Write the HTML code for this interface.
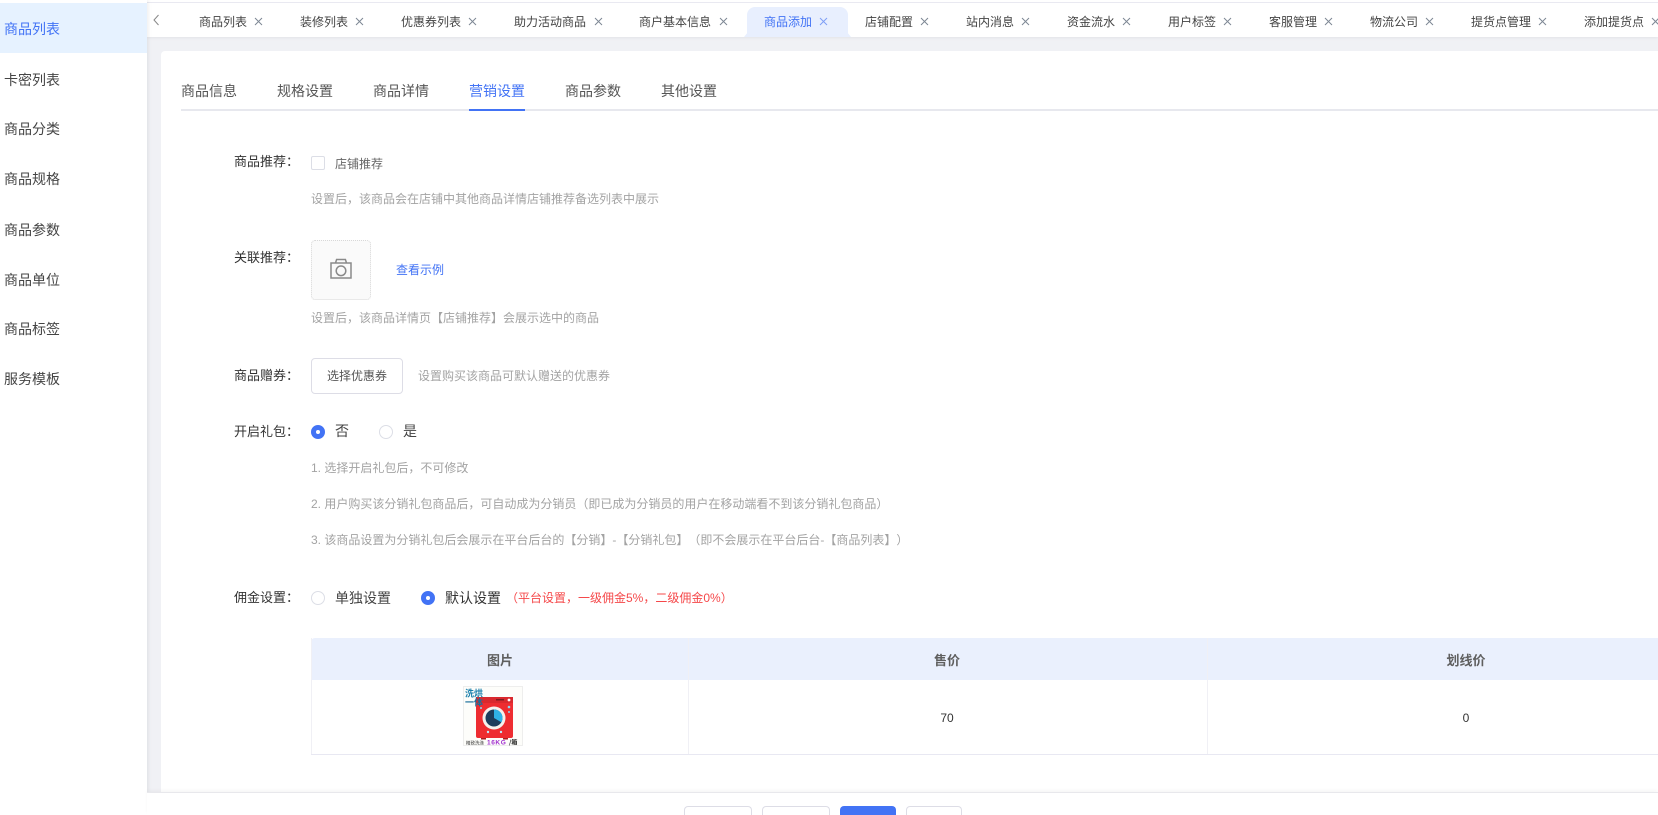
<!DOCTYPE html>
<html lang="zh-CN">
<head>
<meta charset="utf-8">
<title>商品添加</title>
<style>
*{box-sizing:border-box;margin:0;padding:0}
html,body{width:1658px;height:815px;overflow:hidden;background:#fff}
#page{position:relative;width:1658px;height:815px;overflow:hidden;background:#fff;font-family:"Liberation Sans","Noto Sans CJK SC",sans-serif;color:#333;text-spacing-trim:space-all}
.abs,.t,.x,.lb,.h{position:absolute}
.t,.lb,.h{white-space:nowrap;line-height:20px}
#main{position:absolute;left:147px;top:0;width:1511px;height:815px;background:#f0f1f5}
#side{position:absolute;left:0;top:0;width:147px;height:815px;background:#fff;box-shadow:1px 0 4px rgba(0,0,0,.08);z-index:3}
#side .it{position:absolute;left:0;width:147px;height:50px;line-height:50px;padding-left:4px;font-size:14px;color:#444}
#side .on{background:#e6f2ff;color:#4273f5;line-height:52px}
#bar{position:absolute;left:147px;top:0;width:1511px;height:37px;background:#fff;box-shadow:0 1px 3px rgba(0,0,0,.06)}
#ln{position:absolute;left:147px;top:2px;width:1511px;height:1px;background:#e9e9f1;z-index:2}
.tab{font-size:12px;color:#444;top:12px;z-index:2}
.x{width:9px;height:9px;top:17px;z-index:2}
#act{position:absolute;left:747px;top:7px;width:101px;height:30px;background:#e8effe;border-radius:8px 8px 0 0;z-index:1}
#act:before,#act:after{content:"";position:absolute;bottom:0;width:4px;height:5px;background:#e8effe}
#act:before{left:-3px;clip-path:polygon(100% 0,100% 100%,0 100%)}
#act:after{right:-3px;clip-path:polygon(0 0,100% 100%,0 100%)}
#card{position:absolute;left:161px;top:51px;width:1497px;height:741px;background:#fff;border-radius:4px 0 0 0}
.ct{font-size:14px;color:#555;top:81px;z-index:2}
#ul{position:absolute;left:181px;top:109px;width:1477px;height:2px;background:#e7e8ee;z-index:2}
#ul2{position:absolute;left:469px;top:109px;width:56px;height:2px;background:#4273f5;z-index:2}
.lb{left:234px;font-size:13px;color:#333;z-index:2}
.h{font-size:12px;color:#a3a3a3;z-index:2}
.radio{position:absolute;width:14px;height:14px;border-radius:50%;border:1px solid #dcdee6;background:#fff;z-index:2}
.radio.on{background:#4273f5;border-color:#4273f5}
.radio.on:after{content:"";position:absolute;left:4px;top:4px;width:4px;height:4px;border-radius:50%;background:#fff}
.btn{position:absolute;background:#fff;border:1px solid #dddde6;border-radius:4px;z-index:2}
#th{position:absolute;left:311px;top:638px;width:1347px;height:42px;background:#eaf0fd;border-radius:4px 0 0 0;z-index:2}
.thx{font-size:13px;font-weight:bold;color:#5f5f5f;top:651px;transform:translateX(-50%);z-index:3}
.td{font-size:12px;color:#333;top:708px;transform:translateX(-50%);z-index:3}
.vl{position:absolute;width:1px;background:#f0f0f5;z-index:3}
#foot{position:absolute;left:147px;top:792px;width:1511px;height:23px;background:#fff;border-top:1px solid #e8e8ec;box-shadow:0 -2px 3px rgba(0,0,0,.03);z-index:4}
.bb{top:806px;height:9px;border-bottom:0;border-radius:4px 4px 0 0;z-index:5}
</style>
</head>
<body>
<div id="page">
<div id="main"></div>
<div id="side">
  <div class="it on" style="top:3px">商品列表</div>
  <div class="it" style="top:55px">卡密列表</div>
  <div class="it" style="top:104px">商品分类</div>
  <div class="it" style="top:154px">商品规格</div>
  <div class="it" style="top:205px">商品参数</div>
  <div class="it" style="top:255px">商品单位</div>
  <div class="it" style="top:304px">商品标签</div>
  <div class="it" style="top:354px">服务模板</div>
</div>
<div id="bar"></div>
<div id="ln"></div>
<div id="act"></div>
<svg class="abs" style="left:152px;top:13px;z-index:2" width="8" height="14" viewBox="0 0 8 14"><path d="M6.5 2 L2 7 L6.5 12" fill="none" stroke="#888" stroke-width="1"/></svg>

<span class="t tab" style="left:199px">商品列表</span>
<span class="t tab" style="left:300px">装修列表</span>
<span class="t tab" style="left:401px">优惠券列表</span>
<span class="t tab" style="left:514px">助力活动商品</span>
<span class="t tab" style="left:639px">商户基本信息</span>
<span class="t tab" style="left:764px;color:#4273f5">商品添加</span>
<span class="t tab" style="left:865px">店铺配置</span>
<span class="t tab" style="left:966px">站内消息</span>
<span class="t tab" style="left:1067px">资金流水</span>
<span class="t tab" style="left:1168px">用户标签</span>
<span class="t tab" style="left:1269px">客服管理</span>
<span class="t tab" style="left:1370px">物流公司</span>
<span class="t tab" style="left:1471px">提货点管理</span>
<span class="t tab" style="left:1584px">添加提货点</span>

<svg class="x" style="left:254px" viewBox="0 0 9 9"><path d="M1 1L8 8M8 1L1 8" stroke="#7d8794" fill="none"/></svg>
<svg class="x" style="left:355px" viewBox="0 0 9 9"><path d="M1 1L8 8M8 1L1 8" stroke="#7d8794" fill="none"/></svg>
<svg class="x" style="left:468px" viewBox="0 0 9 9"><path d="M1 1L8 8M8 1L1 8" stroke="#7d8794" fill="none"/></svg>
<svg class="x" style="left:594px" viewBox="0 0 9 9"><path d="M1 1L8 8M8 1L1 8" stroke="#7d8794" fill="none"/></svg>
<svg class="x" style="left:719px" viewBox="0 0 9 9"><path d="M1 1L8 8M8 1L1 8" stroke="#7d8794" fill="none"/></svg>
<svg class="x" style="left:819px" viewBox="0 0 9 9"><path d="M1 1L8 8M8 1L1 8" stroke="#7f9ff5" fill="none"/></svg>
<svg class="x" style="left:920px" viewBox="0 0 9 9"><path d="M1 1L8 8M8 1L1 8" stroke="#7d8794" fill="none"/></svg>
<svg class="x" style="left:1021px" viewBox="0 0 9 9"><path d="M1 1L8 8M8 1L1 8" stroke="#7d8794" fill="none"/></svg>
<svg class="x" style="left:1122px" viewBox="0 0 9 9"><path d="M1 1L8 8M8 1L1 8" stroke="#7d8794" fill="none"/></svg>
<svg class="x" style="left:1223px" viewBox="0 0 9 9"><path d="M1 1L8 8M8 1L1 8" stroke="#7d8794" fill="none"/></svg>
<svg class="x" style="left:1324px" viewBox="0 0 9 9"><path d="M1 1L8 8M8 1L1 8" stroke="#7d8794" fill="none"/></svg>
<svg class="x" style="left:1425px" viewBox="0 0 9 9"><path d="M1 1L8 8M8 1L1 8" stroke="#7d8794" fill="none"/></svg>
<svg class="x" style="left:1538px" viewBox="0 0 9 9"><path d="M1 1L8 8M8 1L1 8" stroke="#7d8794" fill="none"/></svg>
<svg class="x" style="left:1651px" viewBox="0 0 9 9"><path d="M1 1L8 8M8 1L1 8" stroke="#7d8794" fill="none"/></svg>

<div id="card"></div>
<span class="t ct" style="left:181px">商品信息</span>
<span class="t ct" style="left:277px">规格设置</span>
<span class="t ct" style="left:373px">商品详情</span>
<span class="t ct" style="left:469px;color:#4273f5">营销设置</span>
<span class="t ct" style="left:565px">商品参数</span>
<span class="t ct" style="left:661px">其他设置</span>
<div id="ul"></div><div id="ul2"></div>

<span class="lb" style="top:152px">商品推荐：</span>
<div class="abs" style="left:311px;top:156px;width:14px;height:14px;border:1px solid #dcdee6;border-radius:2px;background:#fff;z-index:2"></div>
<span class="t" style="left:335px;top:154px;font-size:12px;color:#666;z-index:2">店铺推荐</span>
<span class="h" style="left:311px;top:189px">设置后，该商品会在店铺中其他商品详情店铺推荐备选列表中展示</span>

<span class="lb" style="top:248px">关联推荐：</span>
<div class="abs" style="left:311px;top:240px;width:60px;height:60px;background:#fafafa;border:1px dotted #d8d8d8;border-radius:4px;z-index:2"></div>
<svg class="abs" style="left:330px;top:258px;z-index:3" width="22" height="21" viewBox="0 0 22 21"><path d="M1 5H21V20H1Z M5.5 5L6.6 1.5H15.4L16.5 5" fill="none" stroke="#8a8a8a" stroke-width="1.5"/><circle cx="11" cy="12.8" r="4.8" fill="none" stroke="#8a8a8a" stroke-width="1.5"/></svg>
<span class="t" style="left:396px;top:260px;font-size:12px;color:#4273f5;z-index:2">查看示例</span>
<span class="h" style="left:311px;top:308px">设置后，该商品详情页【店铺推荐】会展示选中的商品</span>

<span class="lb" style="top:366px">商品赠券：</span>
<div class="btn" style="left:311px;top:358px;width:92px;height:36px;text-align:center;line-height:34px;font-size:12px;color:#555">选择优惠券</div>
<span class="h" style="left:418px;top:366px">设置购买该商品可默认赠送的优惠券</span>

<span class="lb" style="top:422px">开启礼包：</span>
<div class="radio on" style="left:311px;top:425px"></div>
<span class="t" style="left:335px;top:421px;font-size:14px;color:#444;z-index:2">否</span>
<div class="radio" style="left:379px;top:425px"></div>
<span class="t" style="left:403px;top:421px;font-size:14px;color:#444;z-index:2">是</span>
<span class="h" style="left:311px;top:458px">1. 选择开启礼包后，不可修改</span>
<span class="h" style="left:311px;top:494px">2. 用户购买该分销礼包商品后，可自动成为分销员（即已成为分销员的用户在移动端看不到该分销礼包商品）</span>
<span class="h" style="left:311px;top:530px">3. 该商品设置为分销礼包后会展示在平台后台的【分销】-【分销礼包】（即不会展示在平台后台-【商品列表】）</span>

<span class="lb" style="top:588px">佣金设置：</span>
<div class="radio" style="left:311px;top:591px"></div>
<span class="t" style="left:335px;top:588px;font-size:14px;color:#444;z-index:2">单独设置</span>
<div class="radio on" style="left:421px;top:591px"></div>
<span class="t" style="left:445px;top:588px;font-size:14px;color:#333;z-index:2">默认设置</span>
<span class="t" style="left:506px;top:588px;font-size:12px;color:#f5484a;z-index:2">（平台设置，一级佣金5%，二级佣金0%）</span>

<div id="th"></div>
<div class="abs" style="left:311px;top:638px;width:1px;height:117px;background:#f0f0f5;z-index:3"></div>
<div class="abs" style="left:311px;top:754px;width:1347px;height:1px;background:#e8e8f2;z-index:3"></div>
<div class="vl" style="left:688px;top:638px;height:116px"></div>
<div class="vl" style="left:1207px;top:638px;height:116px"></div>
<span class="t thx" style="left:500px">图片</span>
<span class="t thx" style="left:947px">售价</span>
<span class="t thx" style="left:1466px">划线价</span>
<span class="t td" style="left:947px">70</span>
<span class="t td" style="left:1466px">0</span>

<svg class="abs" style="left:463px;top:686px;z-index:3" width="60" height="60" viewBox="0 0 60 60">
  <rect x=".5" y=".5" width="59" height="59" fill="#fdfdfa" stroke="#ddd" stroke-dasharray="1 1"/>
  <rect x="13" y="11" width="37" height="41" rx="2" fill="#ee2c30"/>
  <rect x="13" y="11" width="37" height="6" fill="#d9282d"/>
  <rect x="33" y="13" width="8" height="1.5" fill="#7d1c20"/>
  <circle cx="46" cy="14" r="1.4" fill="#fff"/>
  <circle cx="46" cy="21" r="1.3" fill="#8fd4f2"/>
  <circle cx="46" cy="26" r="1" fill="#8fd4f2"/>
  <circle cx="18" cy="22" r="1" fill="#8fd4f2"/>
  <circle cx="31" cy="32" r="11.5" fill="#f5f1ed"/>
  <circle cx="31" cy="32" r="8.5" fill="#1d3d5c"/>
  <path d="M31 23.5A8.5 8.5 0 0 1 38.4 36.2L31 32Z" fill="#2fb2e8"/>
  <circle cx="25" cy="46" r="1.2" fill="#bfe6f8"/>
  <circle cx="38" cy="46" r="1.2" fill="#bfe6f8"/>
  <rect x="18" y="52" width="5" height="1.5" fill="#a81d22"/>
  <rect x="40" y="52" width="5" height="1.5" fill="#a81d22"/>
  <text x="2" y="10.5" font-size="9" font-weight="bold" fill="#1a7fac" font-family="'Noto Sans CJK SC',sans-serif">洗烘</text>
  <text x="2" y="19.5" font-size="9" font-weight="bold" fill="#1a6f9c" font-family="'Noto Sans CJK SC',sans-serif">一体</text>
  <text x="3" y="58.5" font-size="4.5" fill="#333" font-family="'Noto Sans CJK SC',sans-serif">精致洗涤</text>
  <text x="24" y="58.5" font-size="6.5" font-weight="bold" letter-spacing=".6" fill="#a12fd0" font-family="'Liberation Sans',sans-serif">16KG</text>
  <text x="46" y="58.5" font-size="6" font-weight="bold" fill="#222" font-family="'Noto Sans CJK SC',sans-serif">/箱</text>
</svg>

<div id="foot"></div>
<div class="btn bb" style="left:684px;width:68px"></div>
<div class="btn bb" style="left:762px;width:68px"></div>
<div class="btn bb" style="left:840px;width:56px;background:#4273f5;border-color:#4273f5"></div>
<div class="btn bb" style="left:906px;width:56px"></div>
</div>
</body>
</html>
